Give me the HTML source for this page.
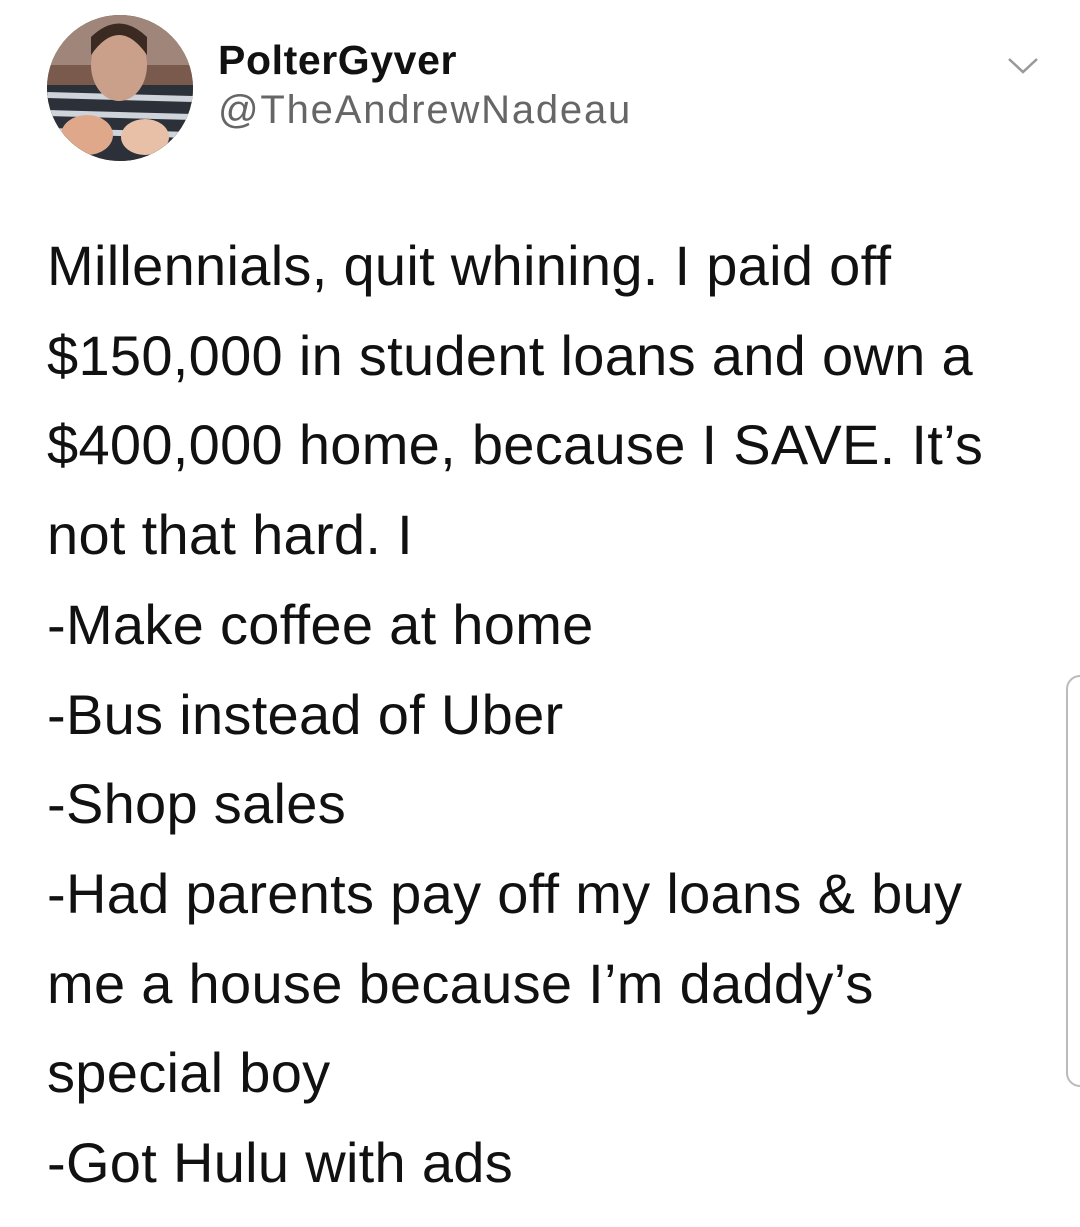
<!DOCTYPE html>
<html><head><meta charset="utf-8"><style>
body{margin:0;width:1080px;height:1227px;background:#fff;position:relative;overflow:hidden;font-family:"Liberation Sans",Arial,sans-serif;}
.av{position:absolute;left:47px;top:15px;width:146px;height:146px;border-radius:50%;overflow:hidden;background:#6b5148;}
.name{position:absolute;left:218px;top:37px;font-size:41px;font-weight:bold;color:#111;letter-spacing:0.6px}
.handle{position:absolute;left:218px;top:88px;font-size:40px;color:#666;letter-spacing:1.8px}
.txt{position:absolute;left:47px;top:221px;font-size:56px;line-height:89.7px;color:#111;letter-spacing:0.3px;white-space:pre}
.scroll{position:absolute;left:1066px;top:675px;width:30px;height:412px;border:2px solid #bbb;border-radius:14px;box-sizing:border-box}
</style></head><body>
<div class="av">
<svg width="146" height="146" viewBox="0 0 146 146">
<rect width="146" height="146" fill="#7a5a4c"/>
<rect x="0" y="0" width="146" height="50" fill="#a0867a"/>
<rect x="0" y="70" width="146" height="76" fill="#2c3038"/>
<g stroke="#cfd4da" stroke-width="6"><line x1="0" y1="80" x2="146" y2="84"/><line x1="0" y1="98" x2="146" y2="102"/><line x1="0" y1="116" x2="146" y2="120"/></g>
<ellipse cx="72" cy="50" rx="28" ry="36" fill="#caa08a"/>
<path d="M44 40 Q72 0 100 40 L100 22 Q72 -5 44 22Z" fill="#3a2a22"/>
<ellipse cx="40" cy="120" rx="26" ry="20" fill="#e0a88a"/>
<ellipse cx="98" cy="122" rx="24" ry="18" fill="#e8c0a8"/>
</svg></div>
<div class="name">PolterGyver</div>
<div class="handle">@TheAndrewNadeau</div>
<svg style="position:absolute;left:1006px;top:56px" width="34" height="20"><path d="M3 3 L17 16 L31 3" fill="none" stroke="#999" stroke-width="2.5"/></svg>
<div class="txt">Millennials, quit whining. I paid off
$150,000 in student loans and own a
$400,000 home, because I SAVE. It’s
not that hard. I
-Make coffee at home
-Bus instead of Uber
-Shop sales
-Had parents pay off my loans &amp; buy
me a house because I’m daddy’s
special boy
-Got Hulu with ads</div>
<div class="scroll"></div>
</body></html>
